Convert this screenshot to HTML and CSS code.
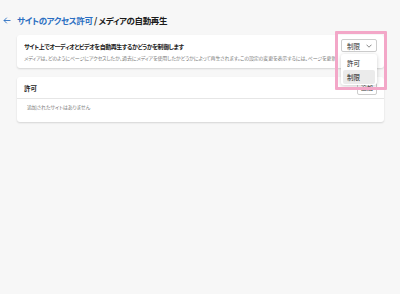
FILE: index.html
```html
<!DOCTYPE html>
<html lang="ja">
<head>
    <meta charset="UTF-8">
    <title>メディアの自動再生</title>
    <link rel="stylesheet" href="styles.css">
</head>
<body>
    <!-- ヘッダー -->
    <div class="page-header">
        <span class="back-btn">
            <svg width="8" height="7" viewBox="0 0 8 7"><path d="M7.5 3.5H1M3.8 0.7L1 3.5l2.8 2.8" fill="none" stroke="#2b6fc2" stroke-width="0.9"/></svg>
        </span>
        <h1 class="page-title"><span class="crumb">サイトのアクセス許可</span> / メディアの自動再生</h1>
    </div>

    <!-- 自動再生の設定 -->
    <div class="card card-setting">
        <div class="setting-text">
            <div class="setting-title">サイト上でオーディオとビデオを自動再生するかどうかを制御します</div>
            <div class="setting-desc">メディアは、どのようにページにアクセスしたか、過去にメディアを使用したかどうかによって再生されます。この設定の変更を表示するには、ページを更新してください。</div>
        </div>
        <div class="select-wrap">
            <div class="select-btn">
                <span>制限</span>
                <svg width="6" height="4" viewBox="0 0 6 4"><path d="M0.5 0.7L3 3.2 5.5 0.7" fill="none" stroke="#555" stroke-width="0.7"/></svg>
            </div>
            <div class="select-menu">
                <div class="menu-item">許可</div>
                <div class="menu-item selected">制限</div>
            </div>
            <div class="highlight"></div>
        </div>
    </div>

    <!-- 許可リスト -->
    <div class="card">
        <div class="list-header">
            <span class="list-title">許可</span>
            <span class="add-btn">追加</span>
        </div>
        <div class="list-empty">追加されたサイトはありません</div>
    </div>
</body>
</html>
```

FILE: styles.css
```css
* {
    box-sizing: border-box;
    margin: 0;
    padding: 0;
}
body {
    font-family: "Noto Sans CJK JP", "Noto Sans", sans-serif;
    font-feature-settings: "palt";
    background-color: #f7f7f7;
    color: #1b1b1b;
    width: 400px;
    height: 294px;
    overflow: hidden;
}
.page-header {
    display: flex;
    align-items: center;
    height: 14px;
    margin: 13px 0 8px 3px;
}
.back-btn {
    display: flex;
    align-items: center;
    width: 14px;
}
.page-title {
    font-size: 8.5px;
    font-weight: 700;
    letter-spacing: -0.4px;
    line-height: 14px;
    color: #1b1b1b;
}
.crumb {
    color: #2b6fc2;
}
.card {
    background: white;
    border-radius: 3px;
    box-shadow: 0 1px 2px rgba(0,0,0,0.14);
    margin-left: 17px;
    width: 367px;
    margin-bottom: 9px;
}
.card-setting {
    display: flex;
    align-items: flex-start;
    gap: 6px;
    height: 33px;
    padding: 7px 7px 0 7px;
}
.setting-text {
    flex: 1;
    min-width: 0;
    overflow: hidden;
}
.setting-title {
    font-size: 6px;
    font-weight: 700;
    letter-spacing: -0.45px;
    line-height: 9px;
    white-space: nowrap;
}
.setting-desc {
    font-size: 5px;
    letter-spacing: -0.15px;
    line-height: 8px;
    margin-top: 3px;
    color: #7a7a7a;
    white-space: nowrap;
}
.select-wrap {
    position: relative;
    margin-top: -3px;
    z-index: 2;
}
.select-btn {
    display: flex;
    align-items: center;
    justify-content: space-between;
    width: 36px;
    height: 13px;
    padding: 0 4px 0 5px;
    border: 1px solid #cdcdcd;
    border-radius: 2px;
    background: white;
    font-size: 6.5px;
    color: #333;
}
.select-menu {
    position: absolute;
    top: calc(100% + 2px);
    left: 0;
    width: 36px;
    height: 31px;
    padding: 2px;
    background: white;
    border-radius: 3px;
    box-shadow: 0 1px 4px rgba(0,0,0,0.2);
}
.menu-item {
    height: 14px;
    line-height: 14px;
    padding-left: 4px;
    font-size: 6.5px;
    color: #222;
    border-radius: 2px;
}
.menu-item.selected {
    background-color: #ebebeb;
}
.highlight {
    position: absolute;
    top: -8px;
    left: -6px;
    right: -10px;
    bottom: -38px;
    border: 3px solid #f3a7c8;
    border-radius: 1px;
    pointer-events: none;
}
.list-header {
    display: flex;
    align-items: center;
    justify-content: space-between;
    height: 22px;
    padding: 0 7px;
    border-bottom: 1px solid #e6e6e6;
}
.list-title {
    font-size: 6.5px;
    font-weight: 700;
}
.add-btn {
    width: 20px;
    height: 14px;
    line-height: 12px;
    text-align: center;
    border: 1px solid #cdcdcd;
    border-radius: 2px;
    font-size: 6px;
    color: #333;
}
.list-empty {
    font-size: 5px;
    letter-spacing: -0.15px;
    line-height: 8px;
    padding: 4px 10px 11px;
    color: #7a7a7a;
}
```
